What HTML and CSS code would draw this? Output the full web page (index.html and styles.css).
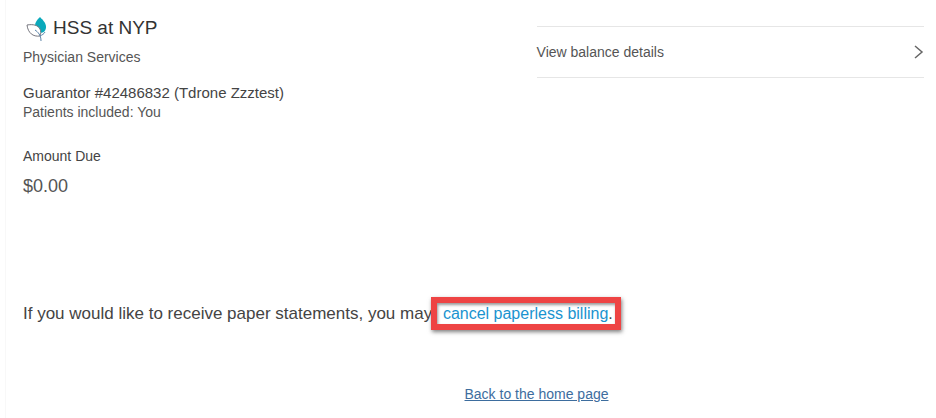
FILE: index.html
```html
<!DOCTYPE html>
<html lang="en">
<head>
  <meta charset="UTF-8">
  <meta name="viewport" content="width=device-width, initial-scale=1.0">
  <title>Billing Account</title>
  <link rel="stylesheet" href="styles.css">
</head>
<body>

<main class="page">
  <div class="account">
    <section class="summary">
      <h1 class="title">
        <svg class="logo" width="22" height="26" viewBox="0 0 22 26" aria-hidden="true">
          <path d="M14 2 C17 5 20 8 20 12 C20 15 18 18 14 18 C11 16 9 14 9 11 C9 7 11 5 14 2 Z" fill="#0aa9bb"/>
          <path d="M1 10 C7 9 12 10 14 14 C15 16 15 19 14 21 C7 22 2 18 1 10 Z" fill="#fff" stroke="#77777f" stroke-width="1"/>
          <path d="M9 15 C12 17 15 20 15 26 M19 17 C18 19 16 20 14 21" fill="none" stroke="#5b83a8" stroke-width="1"/>
        </svg>
        HSS at NYP
      </h1>
      <p class="service">Physician Services</p>
      <p class="guarantor">Guarantor #42486832 (Tdrone Zzztest)</p>
      <p class="patients">Patients included: You</p>
      <p class="due-label">Amount Due</p>
      <p class="due-amount">$0.00</p>
    </section>

    <nav class="links">
      <a class="details" href="#details">
        View balance details
        <svg width="10" height="16" viewBox="0 0 10 16" aria-hidden="true">
          <path d="M1 2 L8 8 L1 14" fill="none" stroke="#666" stroke-width="1.5"/>
        </svg>
      </a>
    </nav>
  </div>

  <p class="paperless">If you would like to receive paper statements, you may <span class="highlight"><a href="#cancel">cancel paperless billing</a>.</span></p>

  <p class="back"><a href="#home">Back to the home page</a></p>
</main>

</body>
</html>
```
FILE: styles.css
```css
body {
  font-family: "Liberation Sans", Arial, sans-serif;
  font-size: 14px;
  line-height: 20px;
  color: #555;
  background-color: #fff;
  margin: 0 0 0 5px;
}

p,
h1 {
  margin: 0;
}

.page {
  box-sizing: border-box;
  min-height: 100vh;
  border-left: 1px solid #f8f8f8;
  padding: 14px 12px 0 17px;
}

.account {
  display: grid;
  grid-template-columns: 57fr 43fr;
}

.title {
  display: flex;
  align-items: center;
  gap: 5px;
  padding-left: 3px;
  font-size: 19px;
  font-weight: normal;
  line-height: 28px;
  color: #333;
}

.service {
  margin-top: 5px;
}

.guarantor {
  margin-top: 16px;
  font-size: 15px;
  line-height: 19px;
  color: #444;
}

.due-label {
  margin-top: 24px;
  color: #444;
}

.due-amount {
  margin-top: 8px;
  font-size: 18px;
  line-height: 24px;
}

.links {
  padding-top: 12px;
}

.details {
  display: flex;
  align-items: center;
  justify-content: space-between;
  padding: 15px 0;
  border-top: 1px solid #e6e6e6;
  border-bottom: 1px solid #e6e6e6;
  color: #555;
  text-decoration: none;
}

.paperless {
  margin-top: 104px;
  font-size: 17px;
  line-height: 24px;
  color: #444;
}

.highlight {
  position: relative;
  margin-left: 6px;
  font-size: 16px;
}

.highlight a {
  color: #1a93cf;
  text-decoration: none;
}

/* red frame drawn over the sentence */
.highlight::after {
  content: "";
  position: absolute;
  inset: -8px -8px -8px -12px;
  border: 6px solid #ee4444;
  box-shadow: 1px 2px 4px rgba(0, 0, 0, 0.5), inset 1px 2px 3px rgba(0, 0, 0, 0.4);
  pointer-events: none;
}

.back {
  margin-top: 58px;
  padding-left: 126px;
  text-align: center;
}

.back a {
  color: #3d6d9e;
}
```
